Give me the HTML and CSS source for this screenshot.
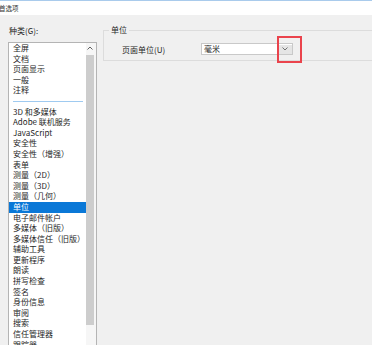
FILE: index.html
```html
<!DOCTYPE html>
<html lang="zh-CN">
<head>
  <meta charset="UTF-8" />
  <title>首选项</title>
  <link rel="stylesheet" href="styles.css">
</head>
<body>
  <div class="titlebar">首选项</div>

  <div class="main">
    <div class="left">
      <div class="cat-label">种类(G):</div>
      <div class="listbox">
        <ul class="items">
          <li>全屏</li>
          <li>文档</li>
          <li>页面显示</li>
          <li>一般</li>
          <li>注释</li>
          <li class="sep"></li>
          <li>3D 和多媒体</li>
          <li>Adobe 联机服务</li>
          <li>JavaScript</li>
          <li>安全性</li>
          <li>安全性（增强）</li>
          <li>表单</li>
          <li>测量（2D）</li>
          <li>测量（3D）</li>
          <li>测量（几何）</li>
          <li class="selected">单位</li>
          <li>电子邮件帐户</li>
          <li>多媒体（旧版）</li>
          <li>多媒体信任（旧版）</li>
          <li>辅助工具</li>
          <li>更新程序</li>
          <li>朗读</li>
          <li>拼写检查</li>
          <li>签名</li>
          <li>身份信息</li>
          <li>审阅</li>
          <li>搜索</li>
          <li>信任管理器</li>
          <li>跟踪器</li>
        </ul>
        <div class="scrollbar">
          <div class="arrow-up">
            <svg width="6" height="4" viewBox="0 0 6 4"><polyline points="0.5,3.5 3,1 5.5,3.5" fill="none" stroke="#606060" stroke-width="1"/></svg>
          </div>
          <div class="thumb"></div>
        </div>
      </div>
    </div>

    <div class="right">
      <fieldset class="group">
        <legend>单位</legend>
        <div class="row">
          <label class="row-label">页面单位(U)</label>
          <div class="combo">
            <span class="combo-value">毫米</span>
            <span class="combo-btn">
              <svg width="6" height="4" viewBox="0 0 6 4"><polyline points="0.5,0.5 3,3 5.5,0.5" fill="none" stroke="#707070" stroke-width="1"/></svg>
            </span>
          </div>
        </div>
      </fieldset>
    </div>
  </div>

  <div class="highlight"></div>
</body>
</html>
```

FILE: styles.css
```css
html, body {
  margin: 0;
  padding: 0;
}
body {
  width: 372px;
  height: 345px;
  overflow: hidden;
  background-color: #f0f0f0;
  font-family: "Noto Sans CJK SC", "Noto Sans", sans-serif;
  font-size: 8px;
  color: #262626;
  position: relative;
}
.titlebar {
  height: 14px;
  border-top: 1px solid #a9cbec;
  background-color: #ffffff;
  font-size: 6.5px;
  line-height: 14px;
  margin-left: -1px;
  color: #333;
}
.main {
  display: flex;
  padding-left: 8px;
}
.left {
  width: 89px;
  padding-top: 11px;
}
.cat-label {
  height: 10px;
  line-height: 10px;
  margin-bottom: 6px;
  padding-left: 1px;
}
.listbox {
  display: flex;
  height: 310px;
  border: 1px solid #b4b4b4;
  background-color: #ffffff;
}
.items {
  flex: 1;
  list-style: none;
  margin: 0;
  padding: 0;
}
.items li {
  height: 10.6px;
  line-height: 10.6px;
  padding-left: 4px;
  white-space: nowrap;
}
.items li.sep {
  display: flex;
  align-items: center;
  padding: 0 3px 0 4px;
}
.items li.sep::before {
  content: "";
  flex: 1;
  height: 1px;
  background-color: #9fcaf0;
}
.items li.selected {
  background-color: #0a78d7;
  color: #ffffff;
}
.scrollbar {
  width: 10px;
  background-color: #f6f6f6;
  display: flex;
  flex-direction: column;
}
.arrow-up {
  height: 10px;
  display: flex;
  align-items: center;
  justify-content: center;
  padding-right: 2px;
}
.thumb {
  margin-top: 2px;
  width: 8px;
  height: 270px;
  background-color: #cdcdcd;
}
.right {
  flex: 1;
  margin-left: 6px;
  padding-top: 10px;
  margin-right: -10px;
}
.group {
  margin: 0;
  padding: 0 0 5px 18px;
  border: 1px solid #dcdcdc;
  min-width: 0;
}
.group legend {
  margin-left: -13px;
  padding: 0 2px;
  height: 10px;
  line-height: 10px;
}
.row {
  display: flex;
  align-items: center;
  margin-top: 8px;
  height: 12px;
}
.row-label {
  width: 79px;
}
.combo {
  width: 90px;
  height: 10px;
  border: 1px solid #c9c9c9;
  background-color: #ffffff;
  display: flex;
  align-items: center;
  justify-content: space-between;
}
.combo-value {
  padding-left: 2px;
  line-height: 10px;
}
.combo-btn {
  width: 14px;
  height: 9px;
  margin-right: 0;
  background-color: #e5e5e5;
  display: flex;
  align-items: center;
  justify-content: center;
}
.highlight {
  position: absolute;
  left: 277px;
  top: 36px;
  width: 21px;
  height: 23px;
  border: 2px solid #ea434c;
}
```
